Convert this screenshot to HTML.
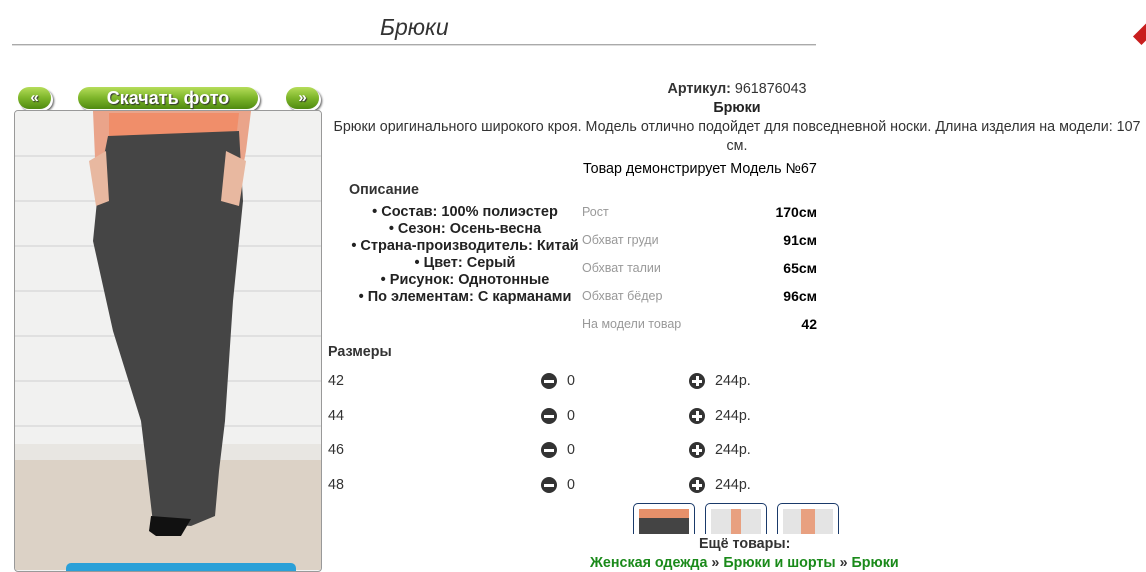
<!DOCTYPE html>
<html><head><meta charset="utf-8"><style>
body{margin:0;width:1146px;height:568px;overflow:hidden;background:#fff;font-family:"Liberation Sans",Arial,sans-serif;color:#333;position:relative}
.a{position:absolute;white-space:nowrap}
.btn{position:absolute;height:22px;border-radius:11px;background:linear-gradient(#b6dd5a,#7db52a 50%,#4f8a10);box-shadow:2px 2px 0 #fff,3px 3px 2px #555;color:#fff;font-weight:bold;text-align:center;line-height:22px;text-shadow:1px 1px 1px #333}
.lbl{color:#999;font-size:12.5px}
.val{font-weight:bold;color:#000;font-size:14px;text-align:right;width:100px}
.t{font-size:14.3px}
.ic{position:absolute;width:16px;height:16px;border-radius:50%;background:#333}
.ic:before{content:"";position:absolute;left:3px;top:6.5px;width:10px;height:3px;background:#fff}
.pl:after{content:"";position:absolute;left:6.5px;top:3px;width:3px;height:10px;background:#fff}
.th{position:absolute;top:503px;width:60px;height:30px;border:1px solid #1a3a6a;border-bottom:none;border-radius:5px 5px 0 0;background:#fff;overflow:hidden}
</style></head><body>
<div class="a" style="left:380px;top:14px;font-size:23px;font-style:italic;color:#333">Брюки</div>
<div class="a" style="left:12px;top:44px;width:804px;height:1px;background:#aaa;border-bottom:1px solid #ddd"></div>
<div class="a" style="left:1139px;top:22px;width:12px;height:22px;background:#c81e1e;transform:rotate(45deg)"></div>

<div class="btn" style="left:18px;top:87px;width:33px;font-size:15px">«</div>
<div class="btn" style="left:78px;top:87px;width:180px;font-size:18px">Скачать фото</div>
<div class="btn" style="left:286px;top:87px;width:33px;font-size:15px">»</div>

<div class="a" style="left:14px;top:110px;width:306px;height:460px;border:1px solid #999;border-radius:4px;overflow:hidden;background:#f2f2f2">
<svg width="308" height="460" viewBox="14 110 308 460" style="position:absolute;left:0;top:0">
<rect x="14" y="110" width="308" height="335" fill="#f1f1f0"/>
<g stroke="#dadada" stroke-width="1.5">
<line x1="14" y1="155" x2="322" y2="155"/><line x1="14" y1="200" x2="322" y2="200"/><line x1="14" y1="245" x2="322" y2="245"/><line x1="14" y1="290" x2="322" y2="290"/><line x1="14" y1="335" x2="322" y2="335"/><line x1="14" y1="380" x2="322" y2="380"/><line x1="14" y1="425" x2="322" y2="425"/></g>
<rect x="14" y="443" width="308" height="16" fill="#e8e6e2"/>
<rect x="14" y="459" width="308" height="110" fill="#dcd2c6"/>
<path d="M92 110 L250 110 L245 150 L235 205 L220 190 L225 150 L110 150 L112 190 L95 180 Z" fill="#eaa48a"/>
<path d="M108 112 L238 112 L236 130 L108 140 Z" fill="#f08e6a"/>
<path d="M107 135 L238 130 L242 200 L232 300 L224 420 L218 470 L214 515 L190 525 L152 522 L146 470 L140 420 L112 330 L92 240 L98 180 Z" fill="#454545"/>
<path d="M150 515 L190 518 L180 535 L155 535 L148 530 Z" fill="#111"/>
<path d="M88 160 L105 150 L108 200 L95 205 Z M225 150 L245 160 L238 205 L220 200 Z" fill="#e8b8a0"/>
</svg>
<div style="position:absolute;left:51px;top:452px;width:230px;height:10px;border-radius:5px 5px 0 0;background:#2aa0d8"></div>
</div>

<div class="a t" style="left:328px;width:818px;text-align:center;top:80px;line-height:19px"><b>Артикул:</b> 961876043<br><b style="color:#222">Брюки</b><br>Брюки оригинального широкого кроя. Модель отлично подойдет для повседневной носки. Длина изделия на модели: 107<br>см.</div>
<div class="a t" style="left:583px;top:161px;color:#000">Товар демонстрирует Модель №67</div>
<div class="a t" style="left:349px;top:182px;font-weight:bold">Описание</div>
<div class="a" style="left:330px;top:204px;width:270px;text-align:center;font-size:14.5px;font-weight:bold;line-height:17px;color:#222">• Состав: 100% полиэстер<br>• Сезон: Осень-весна<br>• Страна-производитель: Китай<br>• Цвет: Серый<br>• Рисунок: Однотонные<br>• По элементам: С карманами</div>
<div class="a lbl" style="left:582px;top:205px">Рост</div><div class="a val" style="left:717px;top:204px">170см</div>
<div class="a lbl" style="left:582px;top:233px">Обхват груди</div><div class="a val" style="left:717px;top:232px">91см</div>
<div class="a lbl" style="left:582px;top:261px">Обхват талии</div><div class="a val" style="left:717px;top:260px">65см</div>
<div class="a lbl" style="left:582px;top:289px">Обхват бёдер</div><div class="a val" style="left:717px;top:288px">96см</div>
<div class="a lbl" style="left:582px;top:317px">На модели товар</div><div class="a val" style="left:717px;top:316px">42</div>
<div class="a t" style="left:328px;top:344px;font-weight:bold">Размеры</div>

<div class="a t" style="left:328px;top:373px">42</div><div class="ic" style="left:541px;top:373px"></div><div class="a t" style="left:567px;top:373px">0</div><div class="ic pl" style="left:689px;top:373px"></div><div class="a t" style="left:715px;top:373px">244р.</div>
<div class="a t" style="left:328px;top:408px">44</div><div class="ic" style="left:541px;top:408px"></div><div class="a t" style="left:567px;top:408px">0</div><div class="ic pl" style="left:689px;top:408px"></div><div class="a t" style="left:715px;top:408px">244р.</div>
<div class="a t" style="left:328px;top:442px">46</div><div class="ic" style="left:541px;top:442px"></div><div class="a t" style="left:567px;top:442px">0</div><div class="ic pl" style="left:689px;top:442px"></div><div class="a t" style="left:715px;top:442px">244р.</div>
<div class="a t" style="left:328px;top:477px">48</div><div class="ic" style="left:541px;top:477px"></div><div class="a t" style="left:567px;top:477px">0</div><div class="ic pl" style="left:689px;top:477px"></div><div class="a t" style="left:715px;top:477px">244р.</div>

<div class="th" style="left:633px"><div style="margin:5px 0 0 5px;width:50px;height:30px;background:linear-gradient(#e6906a 30%,#444 30%)"></div></div>
<div class="th" style="left:705px"><div style="margin:5px 0 0 5px;width:50px;height:30px;background:#e4e4e4"><div style="margin-left:20px;width:10px;height:30px;background:#e8a080"></div></div></div>
<div class="th" style="left:777px"><div style="margin:5px 0 0 5px;width:50px;height:30px;background:#e4e4e4"><div style="margin-left:18px;width:14px;height:30px;background:#e8a080"></div></div></div>
<div class="a t" style="left:699px;top:536px;font-weight:bold">Ещё товары:</div>
<div class="a t" style="left:590px;top:555px;font-weight:bold;color:#1a8a1a">Женская одежда <span style="color:#333">»</span> Брюки и шорты <span style="color:#333">»</span> Брюки</div>
</body></html>
